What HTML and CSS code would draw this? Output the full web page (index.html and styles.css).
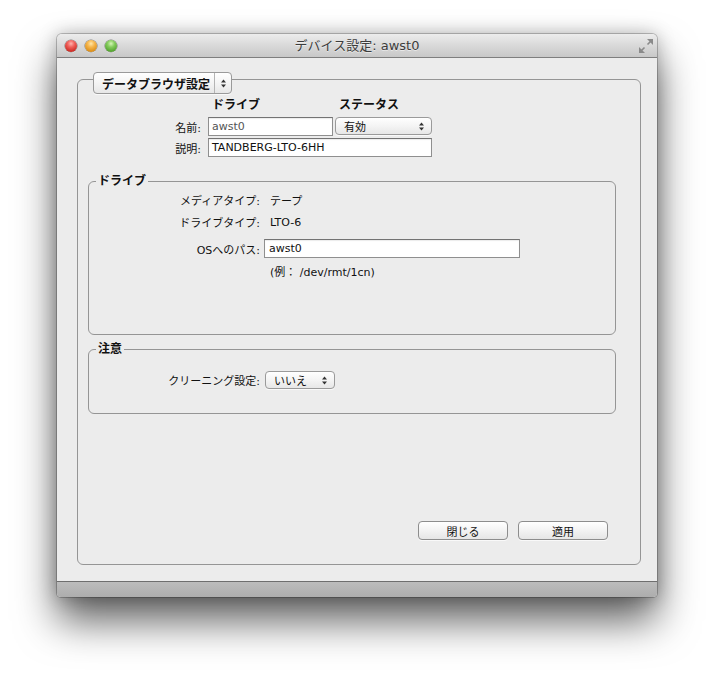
FILE: index.html
```html
<!DOCTYPE html>
<html lang="ja">
<head>
<meta charset="utf-8">
<title>デバイス設定: awst0</title>
<link rel="stylesheet" href="styles.css">
</head>
<body>
<div class="window">
  <div class="titlebar">
    <div class="lights">
      <span class="light red"></span><span class="light yellow"></span><span class="light green"></span>
    </div>
    <div class="title">デバイス設定: awst0</div>
    <div class="resize">
      <svg width="16" height="16" viewBox="0 0 16 16">
        <g fill="#8a8a8a" stroke="#8a8a8a" stroke-width="1.6">
          <polygon points="9,1 15,1 15,7" stroke="none"/>
          <line x1="13" y1="3" x2="9.5" y2="6.5"/>
          <polygon points="1,15 1,9 7,15" stroke="none"/>
          <line x1="3" y1="13" x2="6.5" y2="9.5"/>
        </g>
      </svg>
    </div>
  </div>
  <div class="content">
    <div class="group outer">
      <div class="popup main-popup">
        <span class="popup-label">データブラウザ設定</span>
        <span class="popup-divider">
          <svg class="arrows" width="5" height="9" viewBox="0 0 5 9"><polygon points="2.5,0.5 5,3.5 0,3.5"/><polygon points="0,5.5 5,5.5 2.5,8.5"/></svg>
        </span>
      </div>
      <div class="form-top">
        <span></span><span class="col-head">ドライブ</span><span class="col-head">ステータス</span>
        <span class="label">名前:</span>
        <div class="field dim">awst0</div>
        <div class="popup status-popup">
          <span class="popup-label plain">有効</span>
          <svg class="arrows" width="5" height="9" viewBox="0 0 5 9"><polygon points="2.5,0.5 5,3.5 0,3.5"/><polygon points="0,5.5 5,5.5 2.5,8.5"/></svg>
        </div>
        <span class="label">説明:</span>
        <div class="field wide">TANDBERG-LTO-6HH</div>
      </div>

      <div class="group inner drive">
        <div class="group-title">ドライブ</div>
        <div class="row r1"><span class="rlabel">メディアタイプ:</span><span class="value">テープ</span></div>
        <div class="row r2"><span class="rlabel">ドライブタイプ:</span><span class="value">LTO-6</span></div>
        <div class="row r3"><span class="rlabel">OSへのパス:</span><div class="field path">awst0</div></div>
        <div class="row r4"><span class="rlabel"></span><span class="value">(例： /dev/rmt/1cn)</span></div>
      </div>

      <div class="group inner note">
        <div class="group-title">注意</div>
        <div class="row r-clean"><span class="rlabel">クリーニング設定:</span>
          <div class="popup clean-popup">
            <span class="popup-label plain">いいえ</span>
            <svg class="arrows" width="5" height="9" viewBox="0 0 5 9"><polygon points="2.5,0.5 5,3.5 0,3.5"/><polygon points="0,5.5 5,5.5 2.5,8.5"/></svg>
          </div>
        </div>
      </div>

      <div class="buttons">
        <button class="btn">閉じる</button>
        <button class="btn">適用</button>
      </div>
    </div>
  </div>
  <div class="bottombar"></div>
</div>
</body>
</html>
```

FILE: styles.css
```css
html, body {
  margin: 0;
  padding: 0;
  background: #ffffff;
}
body {
  width: 714px;
  height: 676px;
  overflow: hidden;
  font-family: "DejaVu Sans", "Noto Sans CJK JP", sans-serif;
  font-size: 11px;
  color: #111;
}
.window {
  box-sizing: border-box;
  width: 600px;
  height: 563px;
  margin: 34px 0 0 57px;
  background: #ececec;
  border-radius: 5px 5px 4px 4px;
  display: flex;
  flex-direction: column;
  overflow: hidden;
  box-shadow: 0 0 0 1px rgba(0,0,0,0.22), 0 0 18px rgba(0,0,0,0.25), 0 24px 40px rgba(0,0,0,0.62);
}
.titlebar {
  box-sizing: border-box;
  height: 24px;
  border-bottom: 1px solid #7e7e7e;
  background: linear-gradient(#ececec, #d9d9d9 50%, #c8c8c8);
  display: grid;
  grid-template-columns: 1fr auto 1fr;
  align-items: center;
}
.lights {
  display: flex;
  gap: 8px;
  padding-left: 8px;
}
.light {
  width: 12px;
  height: 12px;
  border-radius: 50%;
  box-shadow: 0 0 0 0.5px rgba(0,0,0,0.45), 0 1px 0 rgba(255,255,255,0.6);
}
.red { background: radial-gradient(circle at 50% 30%, #ffb3ae 0, #f0605a 35%, #c8271f 80%, #a91912 100%); }
.yellow { background: radial-gradient(circle at 50% 30%, #ffe6a8 0, #f6b54a 35%, #d88a14 80%, #b56d0a 100%); }
.green { background: radial-gradient(circle at 50% 30%, #d5f5b6 0, #84cc5c 35%, #4f9f2b 80%, #3a8019 100%); }
.title {
  font-size: 13px;
  color: #3c3c3c;
  line-height: 16px;
  text-shadow: 0 1px 0 rgba(255,255,255,0.5);
}
.resize {
  justify-self: end;
  padding-right: 3px;
  display: flex;
}
.content {
  flex: 1;
  display: flex;
  flex-direction: column;
  padding: 21px 16px 16px 20px;
  min-height: 0;
}
.group {
  border: 1px solid #959595;
  border-radius: 6px;
  display: flex;
  flex-direction: column;
}
.outer {
  flex: 1;
  padding-bottom: 24px;
}
.popup {
  box-sizing: border-box;
  display: flex;
  align-items: center;
  border: 1px solid #9a9a9a;
  border-radius: 4px;
  background: linear-gradient(#ffffff, #f4f4f4 50%, #e7e7e7);
  box-shadow: 0 1px 0 rgba(255,255,255,0.7);
}
.arrows { fill: #333; flex: none; }
.main-popup {
  align-self: flex-start;
  width: 139px;
  height: 22px;
  margin: -8px 0 0 15px;
  font-weight: bold;
  font-size: 12px;
}
.main-popup .popup-label {
  flex: 1;
  padding-left: 8px;
  white-space: nowrap;
}
.popup-divider {
  align-self: stretch;
  width: 16px;
  border-left: 1px solid #b4b4b4;
  display: flex;
  align-items: center;
  justify-content: center;
}
.popup-label.plain { flex: 1; padding-left: 8px; }
.status-popup, .clean-popup {
  height: 18px;
  padding-right: 7px;
}
.form-top {
  margin-top: 3px;
  display: grid;
  grid-template-columns: 128px 125px 97px;
  grid-template-rows: 18px 19px 19px;
  column-gap: 2px;
  row-gap: 2px;
}
.col-head {
  font-weight: bold;
  font-size: 12px;
  line-height: 16px;
  padding-left: 4px;
  align-self: start;
}
.label {
  text-align: right;
  padding-right: 5px;
  align-self: center;
}
.field {
  box-sizing: border-box;
  background: #fff;
  border: 1px solid #8f8f8f;
  border-top-color: #737373;
  box-shadow: inset 0 1px 1px rgba(0,0,0,0.08);
  padding: 0 3px;
  height: 19px;
  line-height: 17px;
  white-space: nowrap;
}
.field.dim { color: #555; }
.field.wide { grid-column: 2 / 4; }
.inner {
  margin: 24px 24px 0 10px;
}
.group-title {
  align-self: flex-start;
  font-weight: bold;
  font-size: 12px;
  line-height: 14px;
  background: #ececec;
  padding: 0 2px;
  margin: -8px 0 -6px 7px;
}
.drive { padding-bottom: 54px; }
.note { margin-top: 14px; padding-bottom: 24px; }
.row {
  display: flex;
  align-items: center;
  height: 18px;
}
.rlabel {
  box-sizing: border-box;
  width: 173px;
  text-align: right;
  padding-right: 2px;
  flex: none;
}
.value { margin-left: 8px; }
.r1 { margin-top: 9px; }
.r2 { margin-top: 4px; }
.r3 { margin-top: 8px; height: 19px; }
.r4 { margin-top: 4px; }
.field.path { width: 256px; margin-left: 2px; padding-left: 4px; }
.r-clean { margin-top: 21px; }
.clean-popup { width: 70px; margin-left: 3px; }
.buttons {
  margin-top: auto;
  display: flex;
  justify-content: flex-end;
  gap: 10px;
  margin-right: 32px;
}
.btn {
  box-sizing: border-box;
  width: 90px;
  height: 19px;
  padding: 0;
  font-family: "DejaVu Sans", "Noto Sans CJK JP", sans-serif;
  font-size: 11px;
  color: #111;
  border: 1px solid #8d8d8d;
  border-radius: 4px;
  background: linear-gradient(#ffffff, #f3f3f3 50%, #e6e6e6);
  box-shadow: 0 1px 0 rgba(255,255,255,0.7);
}
.bottombar {
  height: 15px;
  border-top: 1px solid #6e6e6e;
  background: linear-gradient(#bcbcbc, #adadad);
}
```
